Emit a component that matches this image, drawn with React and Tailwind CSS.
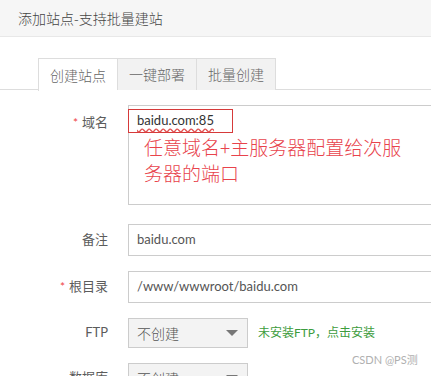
const FONT = { fontFamily: '"Microsoft YaHei", "Noto Sans CJK SC", "Noto Sans", sans-serif' };
const LATIN = { fontFamily: 'Lato, "Noto Sans CJK SC", sans-serif' };

function Label({ children, required }) {
  return (
    <div className="w-[108px] shrink-0 text-right text-[13px] text-[#5c5c5c]" style={LATIN}>
      {required && <span className="text-[#ef4444] mr-1 text-[12px]">*</span>}
      {children}
    </div>
  );
}

function Select({ value }) {
  return (
    <div className="ml-[20px] w-[120px] h-[30px] shrink-0 border border-[#ccc] bg-[#f3f3f3] flex items-center justify-between px-[8px] text-[14px] text-[#555] font-light">
      <span>{value}</span>
      <span className="w-0 h-0 border-l-[6px] border-r-[6px] border-t-[6px] border-l-transparent border-r-transparent border-t-[#777] mr-[1px]"></span>
    </div>
  );
}

export default function App() {
  const tabs = ["创建站点", "一键部署", "批量创建"];
  return (
    <div className="w-[431px] h-[376px] overflow-hidden bg-white relative" style={FONT}>
      {/* Title bar */}
      <div className="h-[37px] bg-[#f6f6f6] border-b border-[#e8e8e8] flex items-center pl-[18px] text-[14px] text-[#444] font-light">
        添加站点-支持批量建站
      </div>

      {/* Tabs */}
      <div className="mt-[21px] pl-[38px] flex border-b border-[#ddd] h-[32px]">
        {tabs.map((t, i) => (
          <div
            key={t}
            className={`h-[32px] flex items-center justify-center text-[14px] text-[#666] font-light border-t border-l border-[#ddd] ${
              i === 2 ? "border-r w-[80px]" : "w-[79px]"
            } ${i === 0 ? "bg-white h-[33px]" : "bg-[#f2f2f2]"}`}
          >
            {t}
          </div>
        ))}
      </div>

      {/* Form */}
      <div className="pt-[15px] flex flex-col">
        <div className="flex items-start">
          <div className="pt-[8px]">
            <Label required>域名</Label>
          </div>
          <div className="ml-[20px] w-[320px] h-[100px] border border-[#ccc] shrink-0">
            <div className="mt-[3px] -ml-px w-[105px] h-[24px] border border-[#d63a3a] pl-[8px] flex items-center text-[13px] text-[#333]" style={LATIN}>
              <span className="underline decoration-wavy decoration-[#e05050] underline-offset-2">baidu.com:85</span>
            </div>
            <div className="pl-[15px] pt-[1px] text-[19px] leading-[26px] text-[#e8434c] font-light">
              任意域名+主服务器配置给次服
              <br />
              务器的端口
            </div>
          </div>
        </div>

        <div className="flex items-center mt-[19px]">
          <Label>备注</Label>
          <div className="ml-[20px] w-[320px] h-[32px] border border-[#ccc] shrink-0 flex items-center pl-[8px] text-[13px] text-[#555]" style={LATIN}>
            baidu.com
          </div>
        </div>

        <div className="flex items-center mt-[15px]">
          <Label required>根目录</Label>
          <div className="ml-[20px] w-[320px] h-[32px] border border-[#ccc] shrink-0 flex items-center pl-[8px] text-[13px] text-[#555]" style={LATIN}>
            /www/wwwroot/baidu.com
          </div>
        </div>

        <div className="flex items-center mt-[15px]">
          <Label>FTP</Label>
          <Select value="不创建" />
          <span className="ml-[10px] text-[12px] text-[#3d9c3d]" style={LATIN}>未安装FTP，点击安装</span>
        </div>

        <div className="flex items-center mt-[15px]">
          <Label>数据库</Label>
          <Select value="不创建" />
        </div>
      </div>

      <div className="absolute left-[352px] top-[352px] text-[11px] text-[#b0b0b0]" style={LATIN}>CSDN @PS测</div>
    </div>
  );
}
